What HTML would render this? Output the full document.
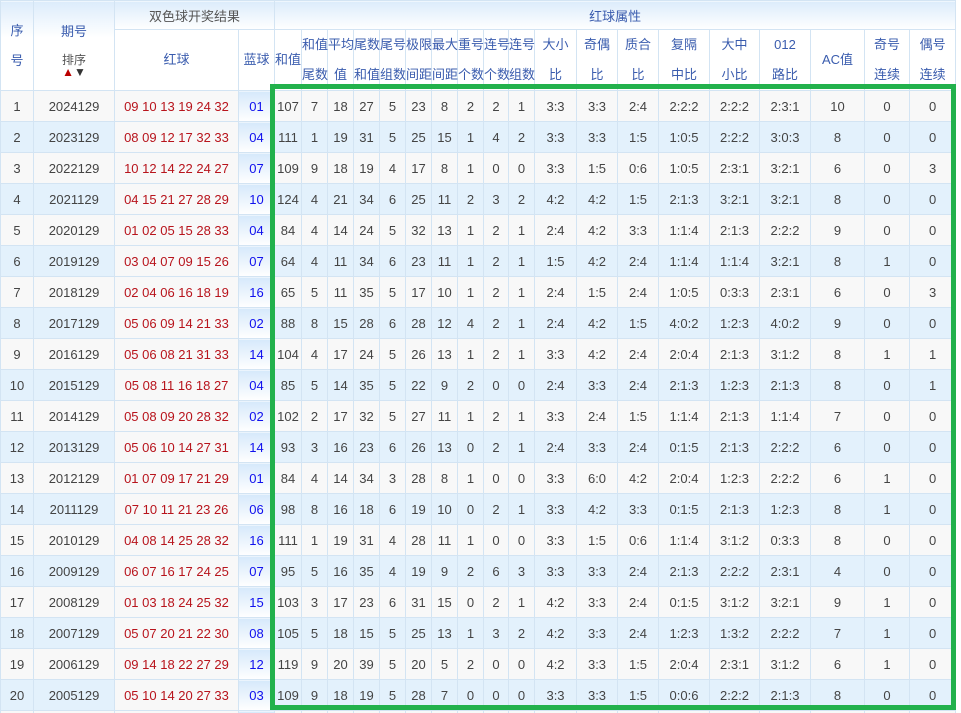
<!DOCTYPE html>
<html><head><meta charset="utf-8">
<style>
html,body{margin:0;padding:0;background:#fff;width:961px;height:713px;overflow:hidden}
table{border-collapse:collapse;table-layout:fixed;width:956px;font-family:"Liberation Sans","Noto Sans CJK SC",sans-serif;font-size:13px;color:#444}
td,th{border:1px solid #d3e4f3;padding:0;text-align:center;white-space:nowrap;overflow:visible;font-weight:normal}
thead th{color:#3a5cae;background:#fff}
.h1 th{height:28px;background:linear-gradient(#dcecfb,#ffffff);}
.h1 th[rowspan]{background:linear-gradient(#dcecfb,#ffffff 40%,#ffffff)}
.h1 th.g{color:#555}
.h2 th{height:60px;line-height:30px}
tbody td{height:30px}
tbody tr.o td{background:#f8f8f8}
tbody tr.e td{background:#e3f1fc}
tbody tr td.r{background:#f8f8f8;color:#b8141c}
tbody tr td.b{background:linear-gradient(#d6e9fb,#ffffff);color:#1010ee}
.sort{font-size:12px;color:#555;line-height:13px;display:block;margin-top:14px}
.arr{font-size:12px;line-height:11px;display:block}
.box{position:absolute;left:270px;top:84px;width:686px;height:626px;box-sizing:border-box;border:5px solid #22b14c}
</style></head><body>
<table>
<colgroup>
<col style="width:33px"><col style="width:81px"><col style="width:124px"><col style="width:36px">
<col style="width:27px"><col style="width:26px"><col style="width:26px"><col style="width:26px"><col style="width:26px"><col style="width:26px"><col style="width:26px"><col style="width:26px"><col style="width:25px"><col style="width:26px">
<col style="width:42px"><col style="width:41px"><col style="width:41px"><col style="width:51px"><col style="width:50px"><col style="width:51px"><col style="width:54px"><col style="width:45px"><col style="width:46px">
</colgroup>
<thead>
<tr class="h1">
<th rowspan="2" style="line-height:30px">序<br>号</th>
<th rowspan="2"><span style="display:block;margin-top:8px">期号</span><span class="sort">排序</span><span class="arr"><span style="color:#b00">▲</span><span style="color:#333">▼</span></span></th>
<th colspan="2" class="g">双色球开奖结果</th>
<th colspan="19">红球属性</th>
</tr>
<tr class="h2">
<th>红球</th><th>蓝球</th><th>和值</th>
<th>和值<br>尾数</th><th>平均<br>值</th><th>尾数<br>和值</th><th>尾号<br>组数</th><th>极限<br>间距</th><th>最大<br>间距</th><th>重号<br>个数</th><th>连号<br>个数</th><th>连号<br>组数</th>
<th>大小<br>比</th><th>奇偶<br>比</th><th>质合<br>比</th><th>复隔<br>中比</th><th>大中<br>小比</th><th>012<br>路比</th><th>AC值</th><th>奇号<br>连续</th><th>偶号<br>连续</th>
</tr>
</thead>
<tbody>
<tr class="o"><td>1</td><td>2024129</td><td class="r">09 10 13 19 24 32</td><td class="b">01</td><td>107</td><td>7</td><td>18</td><td>27</td><td>5</td><td>23</td><td>8</td><td>2</td><td>2</td><td>1</td><td>3:3</td><td>3:3</td><td>2:4</td><td>2:2:2</td><td>2:2:2</td><td>2:3:1</td><td>10</td><td>0</td><td>0</td></tr>
<tr class="e"><td>2</td><td>2023129</td><td class="r">08 09 12 17 32 33</td><td class="b">04</td><td>111</td><td>1</td><td>19</td><td>31</td><td>5</td><td>25</td><td>15</td><td>1</td><td>4</td><td>2</td><td>3:3</td><td>3:3</td><td>1:5</td><td>1:0:5</td><td>2:2:2</td><td>3:0:3</td><td>8</td><td>0</td><td>0</td></tr>
<tr class="o"><td>3</td><td>2022129</td><td class="r">10 12 14 22 24 27</td><td class="b">07</td><td>109</td><td>9</td><td>18</td><td>19</td><td>4</td><td>17</td><td>8</td><td>1</td><td>0</td><td>0</td><td>3:3</td><td>1:5</td><td>0:6</td><td>1:0:5</td><td>2:3:1</td><td>3:2:1</td><td>6</td><td>0</td><td>3</td></tr>
<tr class="e"><td>4</td><td>2021129</td><td class="r">04 15 21 27 28 29</td><td class="b">10</td><td>124</td><td>4</td><td>21</td><td>34</td><td>6</td><td>25</td><td>11</td><td>2</td><td>3</td><td>2</td><td>4:2</td><td>4:2</td><td>1:5</td><td>2:1:3</td><td>3:2:1</td><td>3:2:1</td><td>8</td><td>0</td><td>0</td></tr>
<tr class="o"><td>5</td><td>2020129</td><td class="r">01 02 05 15 28 33</td><td class="b">04</td><td>84</td><td>4</td><td>14</td><td>24</td><td>5</td><td>32</td><td>13</td><td>1</td><td>2</td><td>1</td><td>2:4</td><td>4:2</td><td>3:3</td><td>1:1:4</td><td>2:1:3</td><td>2:2:2</td><td>9</td><td>0</td><td>0</td></tr>
<tr class="e"><td>6</td><td>2019129</td><td class="r">03 04 07 09 15 26</td><td class="b">07</td><td>64</td><td>4</td><td>11</td><td>34</td><td>6</td><td>23</td><td>11</td><td>1</td><td>2</td><td>1</td><td>1:5</td><td>4:2</td><td>2:4</td><td>1:1:4</td><td>1:1:4</td><td>3:2:1</td><td>8</td><td>1</td><td>0</td></tr>
<tr class="o"><td>7</td><td>2018129</td><td class="r">02 04 06 16 18 19</td><td class="b">16</td><td>65</td><td>5</td><td>11</td><td>35</td><td>5</td><td>17</td><td>10</td><td>1</td><td>2</td><td>1</td><td>2:4</td><td>1:5</td><td>2:4</td><td>1:0:5</td><td>0:3:3</td><td>2:3:1</td><td>6</td><td>0</td><td>3</td></tr>
<tr class="e"><td>8</td><td>2017129</td><td class="r">05 06 09 14 21 33</td><td class="b">02</td><td>88</td><td>8</td><td>15</td><td>28</td><td>6</td><td>28</td><td>12</td><td>4</td><td>2</td><td>1</td><td>2:4</td><td>4:2</td><td>1:5</td><td>4:0:2</td><td>1:2:3</td><td>4:0:2</td><td>9</td><td>0</td><td>0</td></tr>
<tr class="o"><td>9</td><td>2016129</td><td class="r">05 06 08 21 31 33</td><td class="b">14</td><td>104</td><td>4</td><td>17</td><td>24</td><td>5</td><td>26</td><td>13</td><td>1</td><td>2</td><td>1</td><td>3:3</td><td>4:2</td><td>2:4</td><td>2:0:4</td><td>2:1:3</td><td>3:1:2</td><td>8</td><td>1</td><td>1</td></tr>
<tr class="e"><td>10</td><td>2015129</td><td class="r">05 08 11 16 18 27</td><td class="b">04</td><td>85</td><td>5</td><td>14</td><td>35</td><td>5</td><td>22</td><td>9</td><td>2</td><td>0</td><td>0</td><td>2:4</td><td>3:3</td><td>2:4</td><td>2:1:3</td><td>1:2:3</td><td>2:1:3</td><td>8</td><td>0</td><td>1</td></tr>
<tr class="o"><td>11</td><td>2014129</td><td class="r">05 08 09 20 28 32</td><td class="b">02</td><td>102</td><td>2</td><td>17</td><td>32</td><td>5</td><td>27</td><td>11</td><td>1</td><td>2</td><td>1</td><td>3:3</td><td>2:4</td><td>1:5</td><td>1:1:4</td><td>2:1:3</td><td>1:1:4</td><td>7</td><td>0</td><td>0</td></tr>
<tr class="e"><td>12</td><td>2013129</td><td class="r">05 06 10 14 27 31</td><td class="b">14</td><td>93</td><td>3</td><td>16</td><td>23</td><td>6</td><td>26</td><td>13</td><td>0</td><td>2</td><td>1</td><td>2:4</td><td>3:3</td><td>2:4</td><td>0:1:5</td><td>2:1:3</td><td>2:2:2</td><td>6</td><td>0</td><td>0</td></tr>
<tr class="o"><td>13</td><td>2012129</td><td class="r">01 07 09 17 21 29</td><td class="b">01</td><td>84</td><td>4</td><td>14</td><td>34</td><td>3</td><td>28</td><td>8</td><td>1</td><td>0</td><td>0</td><td>3:3</td><td>6:0</td><td>4:2</td><td>2:0:4</td><td>1:2:3</td><td>2:2:2</td><td>6</td><td>1</td><td>0</td></tr>
<tr class="e"><td>14</td><td>2011129</td><td class="r">07 10 11 21 23 26</td><td class="b">06</td><td>98</td><td>8</td><td>16</td><td>18</td><td>6</td><td>19</td><td>10</td><td>0</td><td>2</td><td>1</td><td>3:3</td><td>4:2</td><td>3:3</td><td>0:1:5</td><td>2:1:3</td><td>1:2:3</td><td>8</td><td>1</td><td>0</td></tr>
<tr class="o"><td>15</td><td>2010129</td><td class="r">04 08 14 25 28 32</td><td class="b">16</td><td>111</td><td>1</td><td>19</td><td>31</td><td>4</td><td>28</td><td>11</td><td>1</td><td>0</td><td>0</td><td>3:3</td><td>1:5</td><td>0:6</td><td>1:1:4</td><td>3:1:2</td><td>0:3:3</td><td>8</td><td>0</td><td>0</td></tr>
<tr class="e"><td>16</td><td>2009129</td><td class="r">06 07 16 17 24 25</td><td class="b">07</td><td>95</td><td>5</td><td>16</td><td>35</td><td>4</td><td>19</td><td>9</td><td>2</td><td>6</td><td>3</td><td>3:3</td><td>3:3</td><td>2:4</td><td>2:1:3</td><td>2:2:2</td><td>2:3:1</td><td>4</td><td>0</td><td>0</td></tr>
<tr class="o"><td>17</td><td>2008129</td><td class="r">01 03 18 24 25 32</td><td class="b">15</td><td>103</td><td>3</td><td>17</td><td>23</td><td>6</td><td>31</td><td>15</td><td>0</td><td>2</td><td>1</td><td>4:2</td><td>3:3</td><td>2:4</td><td>0:1:5</td><td>3:1:2</td><td>3:2:1</td><td>9</td><td>1</td><td>0</td></tr>
<tr class="e"><td>18</td><td>2007129</td><td class="r">05 07 20 21 22 30</td><td class="b">08</td><td>105</td><td>5</td><td>18</td><td>15</td><td>5</td><td>25</td><td>13</td><td>1</td><td>3</td><td>2</td><td>4:2</td><td>3:3</td><td>2:4</td><td>1:2:3</td><td>1:3:2</td><td>2:2:2</td><td>7</td><td>1</td><td>0</td></tr>
<tr class="o"><td>19</td><td>2006129</td><td class="r">09 14 18 22 27 29</td><td class="b">12</td><td>119</td><td>9</td><td>20</td><td>39</td><td>5</td><td>20</td><td>5</td><td>2</td><td>0</td><td>0</td><td>4:2</td><td>3:3</td><td>1:5</td><td>2:0:4</td><td>2:3:1</td><td>3:1:2</td><td>6</td><td>1</td><td>0</td></tr>
<tr class="e"><td>20</td><td>2005129</td><td class="r">05 10 14 20 27 33</td><td class="b">03</td><td>109</td><td>9</td><td>18</td><td>19</td><td>5</td><td>28</td><td>7</td><td>0</td><td>0</td><td>0</td><td>3:3</td><td>3:3</td><td>1:5</td><td>0:0:6</td><td>2:2:2</td><td>2:1:3</td><td>8</td><td>0</td><td>0</td></tr>
<tr class="o"><td>21</td><td>2004129</td><td class="r"></td><td class="b"></td><td></td><td></td><td></td><td></td><td></td><td></td><td></td><td></td><td></td><td></td><td></td><td></td><td></td><td></td><td></td><td></td><td></td><td></td><td></td></tr>
</tbody>
</table>
<div class="box"></div>
</body></html>
